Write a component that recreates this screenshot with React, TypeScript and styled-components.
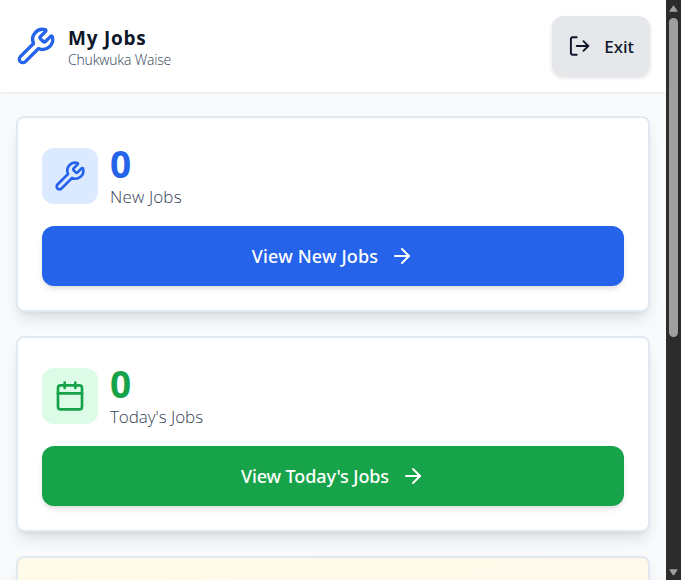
import React from "react";
import styled, { createGlobalStyle } from "styled-components";

const GlobalStyle = createGlobalStyle`
  * { box-sizing: border-box; }
  html, body, #root { height: 100%; margin: 0; }
  body { overflow: hidden; font-family: "Open Sans", "Noto Sans", sans-serif; color: #0f172a; }
`;

const Screen = styled.div`
  display: flex;
  height: 100vh;
  background: #f8fafc;
`;

const Page = styled.div`
  flex: 1;
  min-width: 0;
  overflow: hidden;
`;

const Header = styled.header`
  display: flex;
  align-items: center;
  justify-content: space-between;
  height: 92px;
  padding: 0 16px;
  background: #ffffff;
  box-shadow: 0 1px 2px rgba(0, 0, 0, 0.08);
`;

const Brand = styled.div`
  display: flex;
  align-items: center;
  gap: 12px;
`;

const Stack = styled.div`
  display: flex;
  flex-direction: column;
  white-space: nowrap;
`;

const Title = styled.h1`
  margin: 0;
  padding-top: 2px;
  font-size: 19px;
  line-height: 25px;
  font-weight: 700;
  letter-spacing: 0.75px;
`;

const Subtitle = styled.span`
  font-size: 14px;
  line-height: 18px;
  font-weight: 300;
  color: #334155;
  letter-spacing: -0.17px;
`;

const ExitButton = styled.button`
  display: flex;
  align-items: center;
  gap: 12px;
  width: 98px;
  height: 60px;
  padding: 2px 16px 0 17px;
  border: 0;
  border-radius: 12px;
  background: #e5e7eb;
  color: #0f172a;
  font: 500 17px/28px "Noto Sans", "Open Sans", sans-serif;
  box-shadow: 0 2px 4px rgba(0, 0, 0, 0.12);

  svg { margin: -2px 1px 0 -1px; }
`;

const List = styled.main`
  display: flex;
  flex-direction: column;
  gap: 24px;
  padding: 24px 16px;
`;

const Card = styled.section<{ $warm?: boolean }>`
  display: flex;
  flex-direction: column;
  flex: none;
  gap: 16px;
  height: 196px;
  padding: 24px;
  border: 2px solid #e2e8f0;
  border-radius: 8px;
  background: ${(p) => (p.$warm ? "linear-gradient(to bottom right, #fefce8, #fff7ed)" : "#ffffff")};
  background-origin: border-box;
  box-shadow: 0 10px 15px -3px rgba(0, 0, 0, 0.1), 0 4px 6px -4px rgba(0, 0, 0, 0.1);
`;

const Summary = styled.div`
  display: flex;
  align-items: center;
  gap: 12px;
  height: 68px;
`;

const IconTile = styled.div<{ $bg: string; $color: string }>`
  display: grid;
  place-items: center;
  width: 56px;
  height: 56px;
  border-radius: 12px;
  background: ${(p) => p.$bg};
  color: ${(p) => p.$color};
`;

const Count = styled.span<{ $color: string }>`
  padding-top: 2px;
  font-size: 37px;
  line-height: 40px;
  font-weight: 700;
  color: ${(p) => p.$color};
`;

const Label = styled.span<{ $spacing: number }>`
  font-size: 17px;
  line-height: 26px;
  font-weight: 300;
  color: #334155;
  letter-spacing: ${(p) => p.$spacing}px;
`;

const Action = styled.button<{ $bg: string }>`
  display: flex;
  align-items: center;
  justify-content: center;
  gap: 12px;
  height: 60px;
  flex: none;
  border: 0;
  border-radius: 12px;
  background: ${(p) => p.$bg};
  color: #ffffff;
  font: 500 18px/28px "Noto Sans", "Open Sans", sans-serif;
  box-shadow: 0 4px 6px -1px rgba(0, 0, 0, 0.1), 0 2px 4px -2px rgba(0, 0, 0, 0.1);
`;

const ActionText = styled.span<{ $spacing: number }>`
  letter-spacing: ${(p) => p.$spacing}px;
  white-space: nowrap;
`;

const Scrollbar = styled.div`
  display: flex;
  flex-direction: column;
  align-items: center;
  justify-content: space-between;
  flex: none;
  width: 15px;
  padding: 5px 0 4px;
  background: #2c2c2c;
`;

const Thumb = styled.div`
  width: 9px;
  height: 319px;
  margin: 6px 0 auto;
  border-radius: 5px;
  background: #9f9f9f;
`;

type IconProps = { size: number; d: string[]; color?: string };

const Icon = ({ size, d, color = "currentColor" }: IconProps) => (
  <svg width={size} height={size} viewBox="0 0 24 24" fill="none" stroke={color}
    strokeWidth={2} strokeLinecap="round" strokeLinejoin="round">
    {d.map((path) => <path key={path} d={path} />)}
  </svg>
);

const wrench = ["M14.7 6.3a1 1 0 0 0 0 1.4l1.6 1.6a1 1 0 0 0 1.4 0l3.106-3.105c.32-.322.863-.22.983.218a6 6 0 0 1-8.259 7.057l-7.91 7.91a1 1 0 0 1-2.999-3l7.91-7.91a6 6 0 0 1 7.057-8.259c.438.12.54.662.219.984z"];
const calendar = ["M8 2v4", "M16 2v4", "M5 4h14a2 2 0 0 1 2 2v14a2 2 0 0 1-2 2H5a2 2 0 0 1-2-2V6a2 2 0 0 1 2-2z", "M3 10h18"];
const arrow = ["M5 12h14", "m12 5 7 7-7 7"];
const exit = ["M9 21H5a2 2 0 0 1-2-2V5a2 2 0 0 1 2-2h4", "m16 17 5-5-5-5", "M21 12H9"];

type Job = {
  icon: string[]; label: string; action: string; color: string; tint: string;
  labelSpacing: number; actionSpacing: number;
};

const jobs: Job[] = [
  { icon: wrench, label: "New Jobs", action: "View New Jobs", color: "#2563eb", tint: "#dbeafe", labelSpacing: 0.15, actionSpacing: 0.15 },
  { icon: calendar, label: "Today's Jobs", action: "View Today's Jobs", color: "#16a34a", tint: "#dcfce7", labelSpacing: -0.05, actionSpacing: -0.12 },
];

export default function App() {
  return (
    <Screen>
      <GlobalStyle />
      <Page>
        <Header>
          <Brand>
            <Icon size={40} d={wrench} color="#2563eb" />
            <Stack>
              <Title>My Jobs</Title>
              <Subtitle>Chukwuka Waise</Subtitle>
            </Stack>
          </Brand>
          <ExitButton><Icon size={24} d={exit} />Exit</ExitButton>
        </Header>
        <List>
          {jobs.map((job) => (
            <Card key={job.label}>
              <Summary>
                <IconTile $bg={job.tint} $color={job.color}><Icon size={32} d={job.icon} /></IconTile>
                <Stack>
                  <Count $color={job.color}>0</Count>
                  <Label $spacing={job.labelSpacing}>{job.label}</Label>
                </Stack>
              </Summary>
              <Action $bg={job.color}>
                <ActionText $spacing={job.actionSpacing}>{job.action}</ActionText>
                <Icon size={24} d={arrow} />
              </Action>
            </Card>
          ))}
          <Card $warm />
        </List>
      </Page>
      <Scrollbar>
        <svg width="9" height="7" viewBox="0 0 9 7"><path d="M4.5 .8 8.2 6.2H.8Z" fill="#9f9f9f" stroke="#9f9f9f" strokeLinejoin="round" /></svg>
        <Thumb />
        <svg width="9" height="7" viewBox="0 0 9 7"><path d="M4.5 6.2.8 .8h7.4Z" fill="#9f9f9f" stroke="#9f9f9f" strokeLinejoin="round" /></svg>
      </Scrollbar>
    </Screen>
  );
}
